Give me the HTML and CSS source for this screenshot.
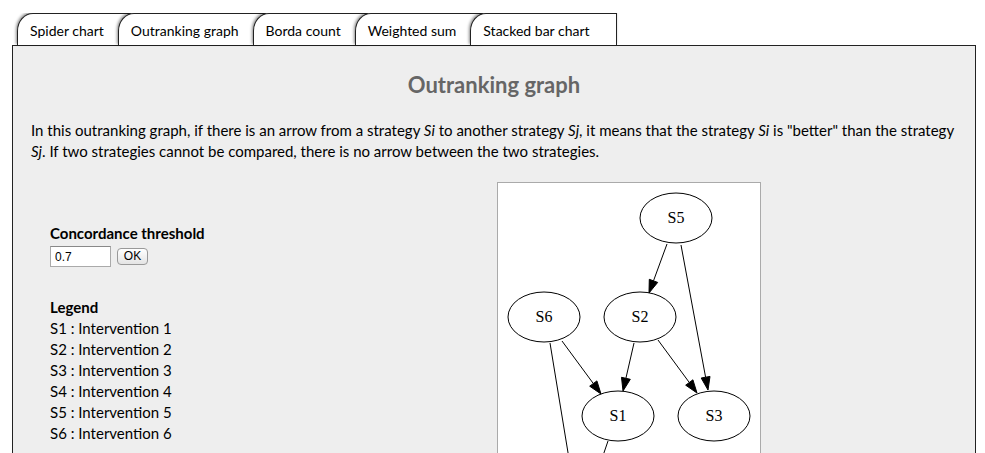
FILE: index.html
```html
<!DOCTYPE html>
<html lang="en">
<head>
  <meta charset="UTF-8" />
  <title>Outranking graph</title>
  <link rel="stylesheet" href="styles.css">
</head>
<body>

  <div class="tabs">
    <div class="tab">Spider chart</div>
    <div class="tab active">Outranking graph</div>
    <div class="tab">Borda count</div>
    <div class="tab">Weighted sum</div>
    <div class="tab">Stacked bar chart</div>
  </div>

  <div class="panel">
    <h2>Outranking graph</h2>
    <p class="intro">In this outranking graph, if there is an arrow from a strategy <em>Si</em> to another strategy <em>Sj</em>, it means that the strategy <em>Si</em> is "better" than the strategy <em>Sj</em>. If two strategies cannot be compared, there is no arrow between the two strategies.</p>

    <div class="content">
      <div class="side">
        <div class="label">Concordance threshold</div>
        <div class="threshold">
          <input type="text" value="0.7" />
          <button>OK</button>
        </div>

        <div class="label legend-title">Legend</div>
        <div class="legend">
          <div>S1 : Intervention 1</div>
          <div>S2 : Intervention 2</div>
          <div>S3 : Intervention 3</div>
          <div>S4 : Intervention 4</div>
          <div>S5 : Intervention 5</div>
          <div>S6 : Intervention 6</div>
        </div>
      </div>

      <div class="graph">
        <svg width="262" height="372" viewBox="0 0 262 372">
          <g fill="none" stroke="#000" stroke-width="1">
            <ellipse cx="178" cy="35" rx="36" ry="25" />
            <ellipse cx="46" cy="134" rx="36" ry="25" />
            <ellipse cx="142" cy="134" rx="36" ry="25" />
            <ellipse cx="120" cy="233" rx="36" ry="25" />
            <ellipse cx="216" cy="233" rx="36" ry="25" />
            <ellipse cx="88" cy="332" rx="36" ry="25" />

            <line x1="169" y1="61" x2="155.5" y2="97.8" />
            <line x1="183" y1="62" x2="207.6" y2="194.2" />
            <line x1="64" y1="158" x2="95.3" y2="200.5" />
            <line x1="136" y1="160" x2="127.9" y2="195.3" />
            <line x1="160" y1="157" x2="191.3" y2="199.5" />
            <line x1="52" y1="160" x2="74" y2="294" />
            <line x1="110" y1="258" x2="97" y2="296" />
          </g>
          <g fill="#000" stroke="#000" stroke-width="1">
            <polygon points="151,110 159.7,99.4 151.3,96.3" />
            <polygon points="210,207 212,193.4 203.2,195" />
            <polygon points="103,211 98.9,197.9 91.7,203.2" />
            <polygon points="125,208 132.3,196.3 123.5,194.3" />
            <polygon points="199,210 194.9,196.8 187.7,202.2" />
            <polygon points="76,307 78.3,294 69.5,295.4" />
            <polygon points="93,308 101,297.5 92.5,294.5" />
          </g>
          <g class="node-label" text-anchor="middle">
            <text x="178" y="40">S5</text>
            <text x="46" y="139">S6</text>
            <text x="142" y="139">S2</text>
            <text x="120" y="238">S1</text>
            <text x="216" y="238">S3</text>
            <text x="88" y="337">S4</text>
          </g>
        </svg>
      </div>
    </div>
  </div>

</body>
</html>
```

FILE: styles.css
```css
body {
  margin: 13px 9px 0 12px;
  font-family: Lato, "Open Sans", sans-serif;
  font-size: 15px;
  color: #000;
  background-color: #fff;
}

.tabs {
  display: flex;
  height: 32px;
  padding-left: 5px;
}

.tab {
  height: 32px;
  line-height: 33px;
  padding: 0 26px 0 12px;
  margin-right: -13px;
  font-size: 14px;
  background-color: #fff;
  border: 1px solid #222;
  border-bottom: none;
  border-top-left-radius: 16px 18px;
  box-sizing: border-box;
  box-shadow: -1px -1px 3px rgba(0, 0, 0, 0.45);
  cursor: pointer;
}

.tab:last-child {
  margin-right: 0;
}

.panel {
  background-color: #eee;
  border: 1px solid #222;
  border-bottom: none;
  padding: 0 18px 40px 18px;
  min-height: 420px;
}

h2 {
  margin: 27px 0 0;
  text-align: center;
  font-size: 22px;
  line-height: 24px;
  color: #666;
}

.intro {
  margin: 23px 0 0;
  line-height: 21px;
}

.content {
  display: flex;
  margin-top: 20px;
}

.side {
  width: 447px;
  padding: 41px 0 0 19px;
  line-height: 21px;
}

.label {
  font-weight: bold;
}

.threshold {
  display: flex;
  align-items: center;
  gap: 6px;
  margin-top: 2px;
}

.threshold input {
  width: 61px;
  height: 21px;
  box-sizing: border-box;
  border: 1px solid #aaa;
  border-top-color: #888;
  padding: 0 4px;
  font-family: "Liberation Sans", sans-serif;
  font-size: 12px;
}

.threshold button {
  width: 31px;
  height: 17px;
  padding: 0;
  border: 1px solid #999;
  border-radius: 4px;
  background: linear-gradient(#fff, #e4e4e4);
  font-family: "Liberation Sans", sans-serif;
  font-size: 12px;
  line-height: 15px;
}

.legend-title {
  margin-top: 30px;
}

.graph {
  width: 262px;
  height: 400px;
  background-color: #fff;
  border: 1px solid #aaa;
}

.graph svg {
  display: block;
}

.node-label {
  font-family: "Liberation Serif", serif;
  font-size: 16px;
}
```
